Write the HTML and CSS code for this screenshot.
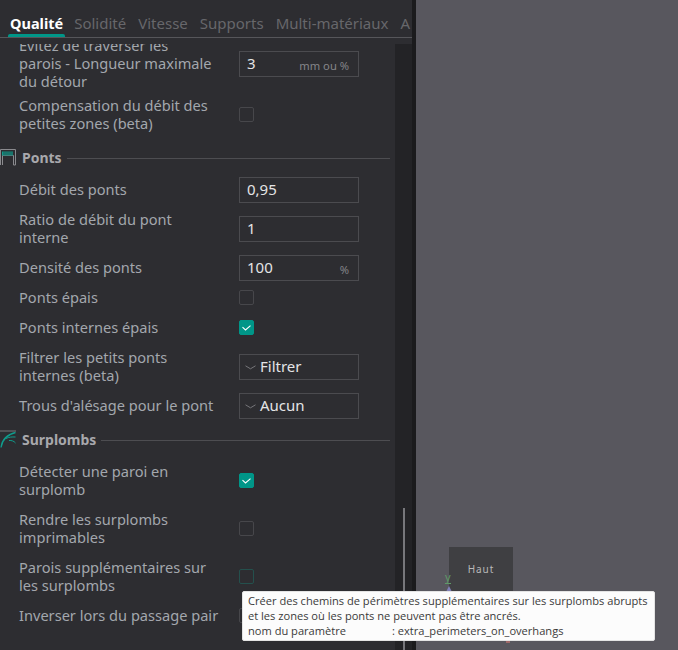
FILE: index.html
```html
<!DOCTYPE html>
<html lang="fr">
<head>
<meta charset="utf-8">
<title>Qualité</title>
<link rel="stylesheet" href="styles.css">
</head>
<body>
<div class="app">
  <aside class="panel">
    <nav class="tabs">
      <span class="tab tab-active">Qualité</span>
      <span class="tab">Solidité</span>
      <span class="tab">Vitesse</span>
      <span class="tab">Supports</span>
      <span class="tab">Multi-matériaux</span>
      <span class="tab">A</span>
    </nav>
    <div class="body">
      <div class="content">
        <div class="rows">
          <div class="row row-first">
            <div class="label">Évitez de traverser les<br>parois - Longueur maximale<br>du détour</div>
            <div class="field"><span class="value">3</span><span class="unit">mm ou %</span></div>
          </div>
          <div class="row row-check">
            <div class="label">Compensation du débit des<br>petites zones (beta)</div>
            <span class="check"></span>
          </div>

          <div class="heading">
            <svg class="heading-icon" width="18" height="18" viewBox="0 0 18 18" aria-hidden="true">
              <path d="M0.500 17V1.500H15.500V17H13.500V7.500H2.500V17" fill="none" stroke="#8a8a8e" stroke-width="1"/>
              <rect x="2" y="3.500" width="11" height="4" fill="#0f9d8d"/>
              <path d="M4 3.500v4M6 3.500v4M8 3.500v4M10 3.500v4M12 3.500v4" stroke="#2d2d31" stroke-width=".7"/>
            </svg>
            <span class="heading-text">Ponts</span>
            <span class="heading-line"></span>
          </div>
          <div class="row">
            <div class="label">Débit des ponts</div>
            <div class="field"><span class="value">0,95</span></div>
          </div>
          <div class="row">
            <div class="label">Ratio de débit du pont<br>interne</div>
            <div class="field"><span class="value">1</span></div>
          </div>
          <div class="row">
            <div class="label">Densité des ponts</div>
            <div class="field"><span class="value">100</span><span class="unit">%</span></div>
          </div>
          <div class="row row-check">
            <div class="label">Ponts épais</div>
            <span class="check"></span>
          </div>
          <div class="row row-check">
            <div class="label">Ponts internes épais</div>
            <span class="check check-on">
              <svg width="15" height="15" viewBox="0 0 15 15" aria-hidden="true"><path d="M3.500 7.200L6.500 10L11.500 5.600" fill="none" stroke="#fff" stroke-width="1.100"/></svg>
            </span>
          </div>
          <div class="row">
            <div class="label">Filtrer les petits ponts<br>internes (beta)</div>
            <div class="field field-select">
              <svg class="chevron" width="11" height="5" viewBox="0 0 11 5" aria-hidden="true"><path d="M0.500 0.800L5.500 3.800L10.500 0.800" fill="none" stroke="#77777b" stroke-width="1"/></svg>
              <span class="value">Filtrer</span>
            </div>
          </div>
          <div class="row">
            <div class="label">Trous d'alésage pour le pont</div>
            <div class="field field-select">
              <svg class="chevron" width="11" height="5" viewBox="0 0 11 5" aria-hidden="true"><path d="M0.500 0.800L5.500 3.800L10.500 0.800" fill="none" stroke="#77777b" stroke-width="1"/></svg>
              <span class="value">Aucun</span>
            </div>
          </div>

          <div class="heading heading-wide">
            <svg class="heading-icon" width="18" height="18" viewBox="0 0 18 18" aria-hidden="true">
              <path d="M0 1H16" stroke="#77777b" stroke-width="1"/>
              <path d="M1 17.500C2 10 7 4.500 15.500 2.500" fill="none" stroke="#0f9d8d" stroke-width="1.300"/>
              <path d="M6 8.500C9 7 12 6.800 15.500 7M9 10.500C11.500 10.300 14 11 15.500 13" fill="none" stroke="#0f9d8d" stroke-width="1"/>
            </svg>
            <span class="heading-text">Surplombs</span>
            <span class="heading-line"></span>
          </div>
          <div class="row row-check">
            <div class="label">Détecter une paroi en<br>surplomb</div>
            <span class="check check-on">
              <svg width="15" height="15" viewBox="0 0 15 15" aria-hidden="true"><path d="M3.500 7.200L6.500 10L11.500 5.600" fill="none" stroke="#fff" stroke-width="1.100"/></svg>
            </span>
          </div>
          <div class="row row-check">
            <div class="label">Rendre les surplombs<br>imprimables</div>
            <span class="check"></span>
          </div>
          <div class="row row-check">
            <div class="label">Parois supplémentaires sur<br>les surplombs</div>
            <span class="check check-hover"></span>
          </div>
          <div class="row row-check">
            <div class="label">Inverser lors du passage pair</div>
            <span class="check"></span>
          </div>
        </div>
      </div>
      <div class="gutter"><span class="thumb"></span></div>
    </div>
  </aside>
  <div class="divider"></div>
  <main class="viewport"></main>
</div>

<div class="cube"><span class="cube-label">Haut</span></div>
<span class="axis-y">y</span>
<span class="axis-tip"></span>
<span class="axis-red"></span>

<div class="tooltip">
  <div>Créer des chemins de périmètres supplémentaires sur les surplombs abrupts</div>
  <div>et les zones où les ponts ne peuvent pas être ancrés.</div>
  <div class="tooltip-param"><span class="tooltip-key">nom du paramètre</span><span>: extra_perimeters_on_overhangs</span></div>
</div>
</body>
</html>
```
FILE: styles.css
```css
* { box-sizing: border-box; }
html, body { margin: 0; height: 100%; }
body {
  position: relative;
  width: 678px;
  height: 650px;
  overflow: hidden;
  background: #58575e;
  font-family: "Noto Sans", "Open Sans", sans-serif;
}
.app { display: flex; height: 650px; }
.panel {
  width: 412px;
  flex: none;
  display: flex;
  flex-direction: column;
  background: #2d2d31;
}
.divider { width: 4px; flex: none; background: #1b1b1d; }
.viewport { flex: 1; background: #58575e; }

.tabs {
  height: 38px;
  flex: none;
  display: flex;
  gap: 12px;
  padding-left: 10px;
  align-items: flex-start;
  border-bottom: 1px solid #56565a;
  overflow: hidden;
  white-space: nowrap;
}
.tab {
  position: relative;
  height: 37px;
  line-height: 46px;
  font-size: 15px;
  color: #67676b;
}
.tab-active { color: #fff; font-weight: 700; font-size: 14.500px; margin-right: -1px; }
.tab-active::after {
  content: "";
  position: absolute;
  left: -2px;
  right: -2px;
  bottom: 0;
  height: 3px;
  border-radius: 2px 2px 0 0;
  background: #009688;
}

.body {
  flex: 1;
  min-height: 0;
  display: flex;
  margin-top: 6px;
}
.content { width: 395px; flex: none; overflow: hidden; }
.rows { margin-top: -11px; }
.gutter {
  flex: 1;
  display: flex;
  flex-direction: column;
  justify-content: flex-end;
  padding-left: 8px;
  background: #232326;
}
.thumb { width: 2px; height: 142px; background: #77777b; }

.row {
  display: flex;
  align-items: center;
  padding: 4px 0 4px 19px;
  min-height: 26px;
}
.row-first { margin-bottom: -2px; }
.row-check { margin-bottom: 4px; }
.label {
  width: 220px;
  flex: none;
  margin: -1px 0 1px;
  font-size: 14.600px;
  line-height: 18px;
  color: #a3a7ad;
  white-space: nowrap;
}
.field {
  width: 120px;
  height: 26px;
  flex: none;
  display: flex;
  align-items: center;
  justify-content: space-between;
  padding: 0 9px 0 7px;
  border: 1px solid #4b4b4f;
}
.field-select { justify-content: flex-start; gap: 4px; padding-left: 5px; }
.value { margin: -1px 0 1px; font-size: 15px; color: #e4e4e6; }
.unit { font-size: 11.200px; color: #85858a; padding-top: 3px; }
.chevron { flex: none; }

.check {
  width: 15px;
  height: 15px;
  flex: none;
  display: block;
  margin: -1px 0 1px;
  border: 1px solid #47474b;
  border-radius: 2px;
}
.check svg { display: block; margin: -1px; }
.check-on { background: #009688; border-color: #009688; }
.check-hover { border-color: #24504d; }

.heading {
  display: flex;
  align-items: center;
  height: 34px;
  margin-bottom: -2px;
}
.heading-wide { margin-bottom: 2px; }
.heading-icon { flex: none; width: 18px; height: 18px; margin: -1px 0 1px; }
.heading-text {
  margin: -1px 0 1px 4px;
  font-size: 14px;
  font-weight: 700;
  color: #a8a8ac;
}
.heading-line {
  flex: 1;
  margin: 0 5px 0 5px;
  height: 1px;
  background: #4d4d51;
}

.cube {
  position: absolute;
  left: 449px;
  top: 547px;
  width: 64px;
  height: 50px;
  padding-top: 14px;
  text-align: center;
  background: #3f3f42;
}
.cube-label {
  display: block;
  font-size: 10px;
  line-height: 16px;
  letter-spacing: .9px;
  color: #b9b9b9;
}
.axis-y {
  position: absolute;
  left: 445px;
  top: 571px;
  font-size: 11px;
  line-height: 12px;
  color: #5f9a68;
  border-bottom: 1px solid #5f9a68;
}
.axis-tip {
  position: absolute;
  left: 446px;
  top: 586px;
  width: 0;
  height: 0;
  border-left: 3px solid transparent;
  border-right: 3px solid transparent;
  border-bottom: 6px solid #8080b8;
}
.axis-red {
  position: absolute;
  left: 506px;
  top: 641px;
  width: 4px;
  height: 2px;
  background: #a06a6a;
}

.tooltip {
  position: absolute;
  left: 242px;
  top: 591px;
  width: 413px;
  height: 50px;
  padding: 1px 5px;
  background: #fcfcfc;
  border: 1px solid #e4e4e4;
  border-radius: 2px;
  font-family: "Open Sans", "Noto Sans", sans-serif;
  font-size: 11.100px;
  line-height: 15px;
  color: #3a3a3a;
  white-space: nowrap;
}
.tooltip-param { display: flex; }
.tooltip-key { width: 144px; flex: none; }
```
